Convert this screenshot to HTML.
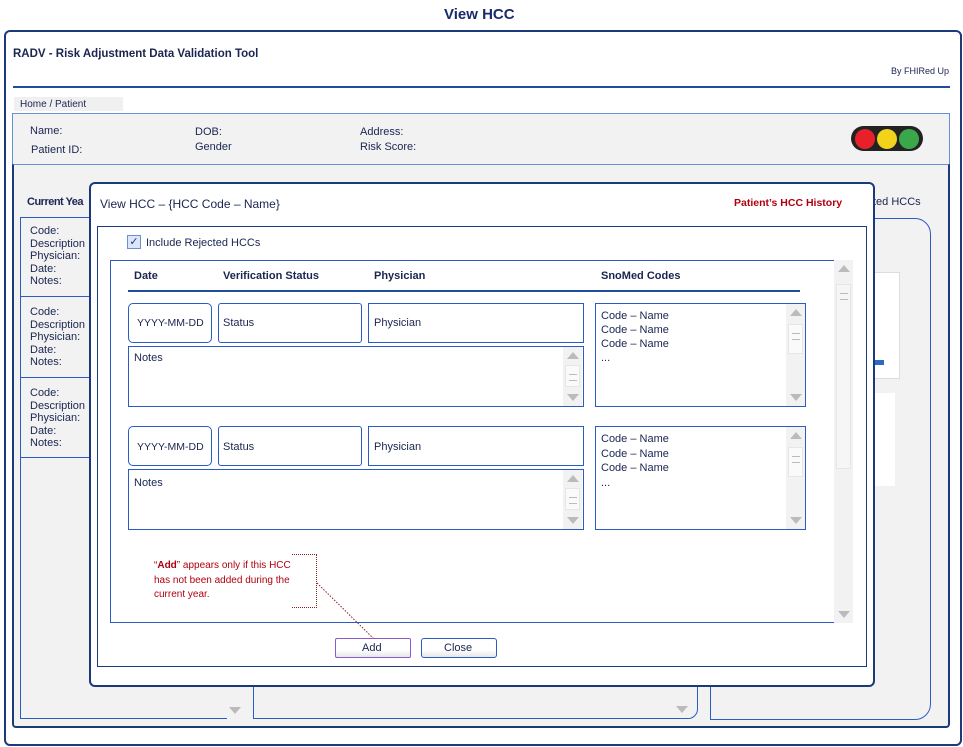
<!DOCTYPE html>
<html><head><meta charset="utf-8"><style>
*{box-sizing:border-box;margin:0;padding:0}
body{width:963px;height:747px;background:#fff;position:relative;overflow:hidden;font-family:"Liberation Sans",Arial,sans-serif;color:#1a2550;font-size:11px}
.a{position:absolute}
.t{position:absolute;white-space:nowrap;line-height:13px}
.b{font-weight:bold}
.lb{border:1.2px solid #2a5cc4;border-radius:3px;background:#fff}
.sb{position:absolute;background:#f2f2f2;width:19px}
.up,.dn{position:absolute;left:4px;width:0;height:0;border-left:6px solid transparent;border-right:6px solid transparent}
.up{top:5px;border-bottom:7px solid #bbb}
.dn{bottom:5px;border-top:7px solid #bbb}
.th{position:absolute;left:2px;width:15px;height:22px;background:#fafafa;border:1px solid #e6e6e6}
.th:after{content:"";position:absolute;left:3px;top:8px;width:8px;height:5px;border-top:1px solid #bbb;border-bottom:1px solid #bbb}
</style></head><body>
<div class="t b" style="left:444px;top:8px;font-size:15px;color:#1a2a6a">View HCC</div>
<div class="a" style="left:4px;top:30px;width:958px;height:716px;border:2px solid #1a3a7a;border-radius:6px"></div>
<div class="t b" style="left:13px;top:48px;font-size:11.5px">RADV - Risk Adjustment Data Validation Tool</div>
<div class="t" style="left:891px;top:65px;font-size:9px">By FHIRed Up</div>
<div class="a" style="left:13px;top:86px;width:937px;height:2px;background:#1e4da0"></div>
<div class="a" style="left:14px;top:97px;width:109px;height:14px;background:#f0f0f0"></div>
<div class="t" style="left:20px;top:98px;font-size:10px">Home / Patient</div>
<div class="a" style="left:12px;top:113px;width:938px;height:52px;background:#f2f2f2;border:1.5px solid #6a8fd6"></div>
<div class="t" style="left:30px;top:125px">Name:</div>
<div class="t" style="left:31px;top:144px">Patient ID:</div>
<div class="t" style="left:195px;top:126px">DOB:</div>
<div class="t" style="left:195px;top:141px">Gender</div>
<div class="t" style="left:360px;top:126px">Address:</div>
<div class="t" style="left:360px;top:141px">Risk Score:</div>
<div class="a" style="left:851px;top:126px;width:72px;height:25px;background:#222;border-radius:13px"></div>
<div class="a" style="left:855px;top:129px;width:20px;height:20px;border-radius:50%;background:#e8202a"></div>
<div class="a" style="left:877px;top:129px;width:20px;height:20px;border-radius:50%;background:#f2d21a"></div>
<div class="a" style="left:899px;top:129px;width:20px;height:20px;border-radius:50%;background:#3aa84a"></div>
<div class="a" style="left:12px;top:164px;width:938px;height:564px;background:#f2f2f2;border:2px solid #1a3a7a;border-top:1.5px solid #6a8fd6;border-radius:0 0 4px 4px"></div>
<div class="t b" style="left:27px;top:196px;letter-spacing:-0.5px">Current Yea</div>
<div class="t" style="left:873px;top:196px">ted HCCs</div>
<div class="a" style="left:20px;top:217px;width:222px;height:502px;border:1.2px solid #2a5cc4"></div>
<div class="a" style="left:20px;top:296px;width:222px;height:1px;background:#2a5cc4"></div>
<div class="a" style="left:20px;top:377px;width:222px;height:1px;background:#2a5cc4"></div>
<div class="a" style="left:20px;top:457px;width:222px;height:1px;background:#2a5cc4"></div>
<div class="t" style="left:30px;top:225px;line-height:12.6px">Code:<br>Description<br>Physician:<br>Date:<br>Notes:</div>
<div class="t" style="left:30px;top:306px;line-height:12.6px">Code:<br>Description<br>Physician:<br>Date:<br>Notes:</div>
<div class="t" style="left:30px;top:387px;line-height:12.6px">Code:<br>Description<br>Physician:<br>Date:<br>Notes:</div>
<div class="sb" style="left:227px;top:686px;height:33px;width:16px"><div class="dn" style="left:2px"></div></div>
<div class="a" style="left:253px;top:660px;width:445px;height:59px;border:1.2px solid #2a5cc4;border-radius:0 0 10px 0"></div>
<div class="sb" style="left:674px;top:690px;height:28px;width:16px"><div class="dn" style="left:2px"></div></div>
<div class="a" style="left:710px;top:218px;width:221px;height:502px;border:1.2px solid #2a5cc4;border-radius:0 16px 16px 0"></div>
<div class="a" style="left:860px;top:272px;width:40px;height:107px;background:#fff;border:1px solid #ddd"></div>
<div class="a" style="left:866px;top:360px;width:18px;height:5px;background:#2a6ac0"></div>
<div class="a" style="left:860px;top:393px;width:35px;height:93px;background:#fff"></div>
<!-- modal -->
<div class="a" style="left:89px;top:182px;width:786px;height:505px;background:#fff;border:2px solid #1a3a7a;border-radius:6px"></div>
<div class="t" style="left:100px;top:198px;font-size:12px">View HCC – {HCC Code – Name}</div>
<div class="t b" style="left:734px;top:197px;color:#b00010;font-size:10.5px">Patient’s HCC History</div>
<div class="a" style="left:97px;top:226px;width:770px;height:441px;border:1.5px solid #1a3a7a"></div>
<div class="a" style="left:127px;top:235px;width:14px;height:14px;border:1px solid #6a8fd6;background:#dde6f8;color:#1a3a7a;font-size:11px;line-height:12px;text-align:center">✓</div>
<div class="t" style="left:146px;top:237px">Include Rejected HCCs</div>
<div class="a" style="left:110px;top:260px;width:725px;height:363px;border:1.2px solid #2a5cc4;border-right:none"></div>
<div class="sb" style="left:834px;top:260px;height:363px"><div class="up"></div><div class="th" style="top:24px;height:185px;background:#f6f6f6"></div><div class="dn"></div></div>
<div class="t b" style="left:134px;top:270px">Date</div>
<div class="t b" style="left:223px;top:270px">Verification Status</div>
<div class="t b" style="left:374px;top:270px">Physician</div>
<div class="t b" style="left:601px;top:270px">SnoMed Codes</div>
<div class="a" style="left:128px;top:290px;width:672px;height:1.5px;background:#1e4da0"></div>
<!-- row1 -->
<div class="a lb" style="left:128px;top:303px;width:84px;height:40px;border-radius:5px"></div>
<div class="t" style="left:137px;top:317px;font-size:10.5px">YYYY-MM-DD</div>
<div class="a lb" style="left:218px;top:303px;width:144px;height:40px"></div>
<div class="t" style="left:223px;top:317px">Status</div>
<div class="a lb" style="left:368px;top:303px;width:216px;height:40px;border-radius:0"></div>
<div class="t" style="left:374px;top:317px">Physician</div>
<div class="a lb" style="left:128px;top:346px;width:456px;height:61px;border-radius:0"></div>
<div class="t" style="left:134px;top:352px">Notes</div>
<div class="sb" style="left:563px;top:347px;height:59px"><div class="up"></div><div class="th" style="top:18px"></div><div class="dn"></div></div>
<div class="a lb" style="left:595px;top:303px;width:211px;height:104px;border-radius:0"></div>
<div class="t" style="left:601px;top:309px;line-height:14px">Code – Name<br>Code – Name<br>Code – Name<br>...</div>
<div class="sb" style="left:786px;top:304px;height:102px"><div class="up"></div><div class="th" style="top:20px;height:30px"></div><div class="dn"></div></div>
<!-- row2 -->
<div class="a lb" style="left:128px;top:426px;width:84px;height:40px;border-radius:5px"></div>
<div class="t" style="left:137px;top:441px;font-size:10.5px">YYYY-MM-DD</div>
<div class="a lb" style="left:218px;top:426px;width:144px;height:40px"></div>
<div class="t" style="left:223px;top:441px">Status</div>
<div class="a lb" style="left:368px;top:426px;width:216px;height:40px;border-radius:0"></div>
<div class="t" style="left:374px;top:441px">Physician</div>
<div class="a lb" style="left:128px;top:469px;width:456px;height:61px;border-radius:0"></div>
<div class="t" style="left:134px;top:477px">Notes</div>
<div class="sb" style="left:563px;top:470px;height:59px"><div class="up"></div><div class="th" style="top:18px"></div><div class="dn"></div></div>
<div class="a lb" style="left:595px;top:426px;width:211px;height:104px;border-radius:0"></div>
<div class="t" style="left:601px;top:432px;line-height:14.5px">Code – Name<br>Code – Name<br>Code – Name<br>...</div>
<div class="sb" style="left:786px;top:427px;height:102px"><div class="up"></div><div class="th" style="top:20px;height:30px"></div><div class="dn"></div></div>
<!-- annotation -->
<div class="t" style="left:154px;top:559px;color:#b00010;font-size:10px;line-height:14.5px">“<b>Add</b>” appears only if this HCC<br>has not been added during the<br>current year.</div>
<div class="a" style="left:292px;top:554px;width:25px;height:54px;border:1px dotted #8a2020;border-left:none"></div>
<svg class="a" style="left:0;top:0" width="963" height="747"><line x1="317" y1="583" x2="374" y2="639" stroke="#8a2020" stroke-width="1" stroke-dasharray="1.5,1.5"/></svg>
<div class="a" style="left:335px;top:638px;width:76px;height:20px;border:1.2px solid #8a5ad0;border-radius:2px;background:linear-gradient(#fff 0,#fff 60%,#e6e6e6 100%)"></div>
<div class="t" style="left:362px;top:642px">Add</div>
<div class="a" style="left:421px;top:638px;width:76px;height:20px;border:1.2px solid #2a5cc4;border-radius:3px;background:linear-gradient(#fff 0,#fff 60%,#e6e6e6 100%)"></div>
<div class="t" style="left:444px;top:642px">Close</div>
</body></html>
